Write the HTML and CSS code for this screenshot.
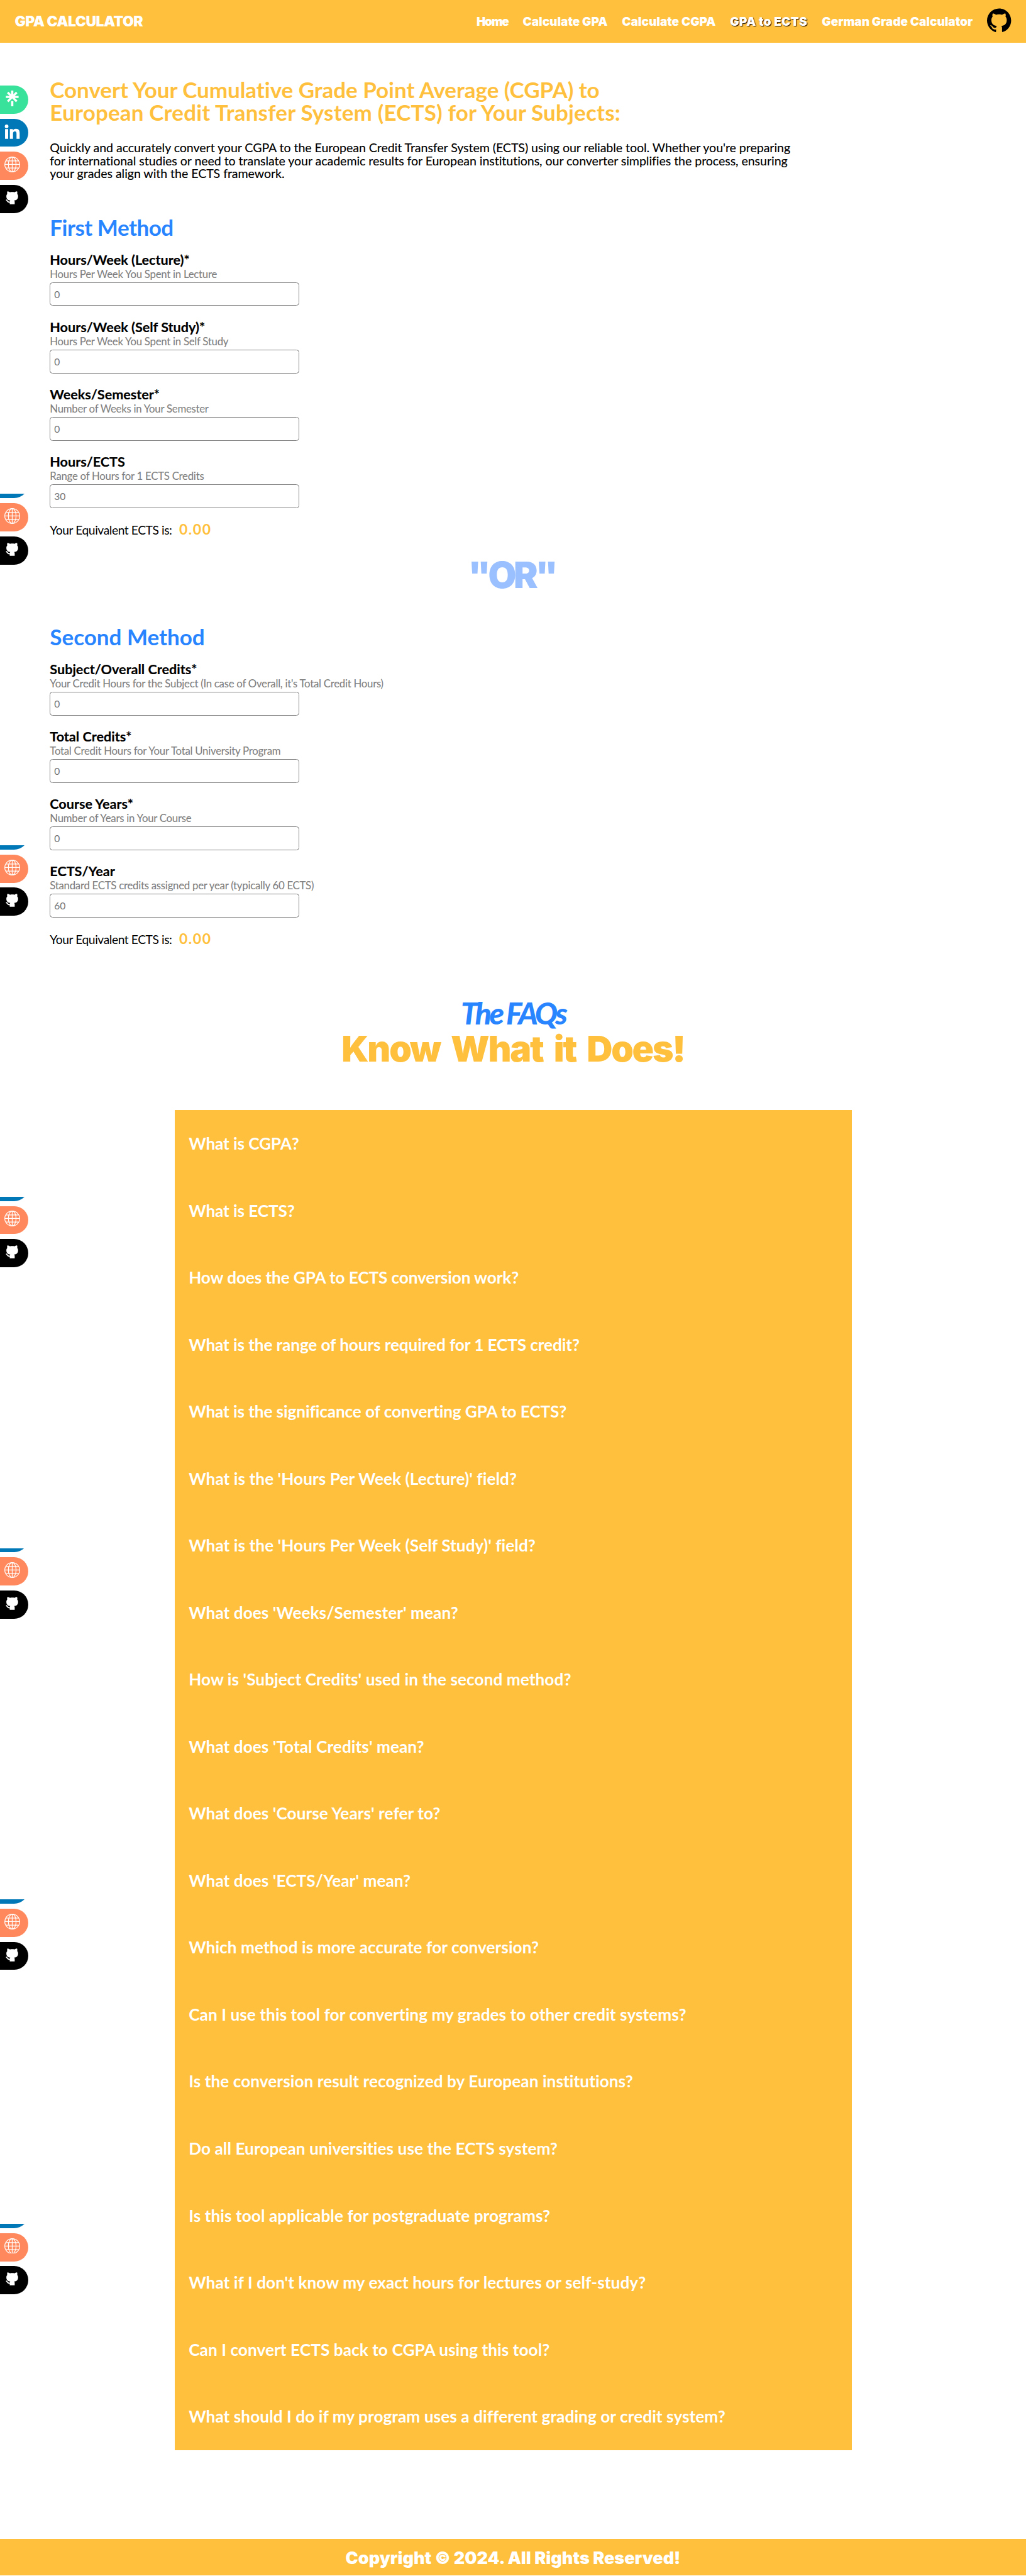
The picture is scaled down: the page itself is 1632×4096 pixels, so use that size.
FILE: index.html
```
<!DOCTYPE html>
<html lang="en">
<head>
<meta charset="utf-8">
<title>GPA to ECTS</title>
<link rel="stylesheet" href="styles.css">
</head>
<body>
<svg class="sprite" aria-hidden="true">
  <symbol id="i-tree" viewBox="0 0 24 24"><path d="m13.736 5.853 4.005-4.117 2.325 2.381-4.2 4.005h5.908v3.304h-5.937l4.229 4.108-2.325 2.334L12 12.099l-5.74 5.769-2.325-2.325 4.229-4.108H2.226V8.121h5.908L3.934 4.117l2.325-2.381 4.005 4.117V0h3.472zM10.264 16.159h3.472V24h-3.472z"/></symbol>
  <symbol id="i-in" viewBox="0 0 24 24"><circle cx="3.4" cy="3.8" r="2.8"/><path d="M1 8h4.8v14.9H1zM8.4 8h4.6v2.1c.7-1.3 2.3-2.6 4.7-2.6 4.6 0 5.7 2.9 5.7 7.1v8.3h-4.8v-7.4c0-1.8-.1-4-2.500-4-2.500 0-2.900 1.900-2.900 3.900v7.500H8.400z"/></symbol>
  <symbol id="i-globe" viewBox="0 0 24 24"><g fill="none" stroke="#fff" stroke-width="1.15"><circle cx="12" cy="12" r="11.4"/><ellipse cx="12" cy="12" rx="5.9" ry="11.4"/><path d="M12 .6v22.8M.6 12h22.8M2.4 6.6h19.2M2.4 17.4h19.2"/></g></symbol>
  <symbol id="i-cat" viewBox="0 0 24 24"><path d="M4.6 2.1C6 2 7.600 2.900 8.600 3.500c2-.5 4.800-.5 6.800 0 1-.6 2.600-1.500 4-1.400.6 1.400.5 2.900.2 3.900 1 1.100 1.400 2.300 1.400 3.800 0 4.200-2.400 5.900-6 6.300.6.7.8 1.400.8 2.300V22H8.200v-3.600c0-.9.2-1.600.8-2.300-3.600-.4-6-2.100-6-6.300 0-1.500.4-2.700 1.400-3.800-.3-1-.4-2.500.2-3.900z"/><path d="M2.500 15.400c2.300.3 1.600 3.900 6.200 3.500" fill="none" stroke="#fff" stroke-width="1.700"/></symbol>
</svg>

<header class="nav">
  <div class="logo">GPA CALCULATOR</div>
  <nav class="links">
    <a class="link link-home">Home</a>
    <a class="link">Calculate GPA</a>
    <a class="link">Calculate CGPA</a>
    <a class="link link-active">GPA to ECTS</a>
    <a class="link">German Grade Calculator</a>
    <svg class="gh" viewBox="0 0 24 24"><path d="M12 .297c-6.63 0-12 5.373-12 12 0 5.303 3.438 9.8 8.205 11.385.6.113.82-.258.82-.577 0-.285-.01-1.04-.015-2.04-3.338.724-4.042-1.61-4.042-1.61C4.422 18.07 3.633 17.7 3.633 17.7c-1.087-.744.084-.729.084-.729 1.205.084 1.838 1.236 1.838 1.236 1.07 1.835 2.809 1.305 3.495.998.108-.776.417-1.305.76-1.605-2.665-.3-5.466-1.332-5.466-5.93 0-1.31.465-2.38 1.235-3.22-.135-.303-.54-1.523.105-3.176 0 0 1.005-.322 3.3 1.23.96-.267 1.98-.399 3-.405 1.02.006 2.04.138 3 .405 2.28-1.552 3.285-1.23 3.285-1.23.645 1.653.24 2.873.12 3.176.765.84 1.23 1.91 1.23 3.22 0 4.61-2.805 5.625-5.475 5.92.42.36.81 1.096.81 2.22 0 1.606-.015 2.896-.015 3.286 0 .315.21.69.825.57C20.565 22.092 24 17.592 24 12.297c0-6.627-5.373-12-12-12"/></svg>
  </nav>
</header>

<aside class="social social-1"><div class="tab tree"><svg><use href="#i-tree"/></svg></div><div class="tab in"><svg><use href="#i-in"/></svg></div><div class="tab globe"><svg><use href="#i-globe"/></svg></div><div class="tab cat"><svg><use href="#i-cat"/></svg></div></aside>
<aside class="social social-cut social-2"><div class="tab in"></div><div class="tab globe"><svg><use href="#i-globe"/></svg></div><div class="tab cat"><svg><use href="#i-cat"/></svg></div></aside>
<aside class="social social-cut social-3"><div class="tab in"></div><div class="tab globe"><svg><use href="#i-globe"/></svg></div><div class="tab cat"><svg><use href="#i-cat"/></svg></div></aside>
<aside class="social social-cut social-4"><div class="tab in"></div><div class="tab globe"><svg><use href="#i-globe"/></svg></div><div class="tab cat"><svg><use href="#i-cat"/></svg></div></aside>
<aside class="social social-cut social-5"><div class="tab in"></div><div class="tab globe"><svg><use href="#i-globe"/></svg></div><div class="tab cat"><svg><use href="#i-cat"/></svg></div></aside>
<aside class="social social-cut social-6"><div class="tab in"></div><div class="tab globe"><svg><use href="#i-globe"/></svg></div><div class="tab cat"><svg><use href="#i-cat"/></svg></div></aside>
<aside class="social social-cut social-7"><div class="tab in"></div><div class="tab globe"><svg><use href="#i-globe"/></svg></div><div class="tab cat"><svg><use href="#i-cat"/></svg></div></aside>

<main class="content">
  <h1 class="title"><span class="tight">Convert Your Cumulative Grade Point Average (CGPA) to</span><br><span class="loose">European Credit Transfer System (ECTS) for Your Subjects:</span></h1>
  <p class="intro">Quickly and accurately convert your CGPA to the European Credit Transfer System (ECTS) using our reliable tool. Whether you're preparing<br>for international studies or need to translate your academic results for European institutions, our converter simplifies the process, ensuring<br>your grades align with the ECTS framework.</p>

  <section class="method">
    <h2 class="heading heading-first">First Method</h2>
    <div class="fields">
      <label class="field"><span class="name">Hours/Week (Lecture)*</span><span class="hint">Hours Per Week You Spent in Lecture</span><input class="box" placeholder="0"></label>
      <label class="field"><span class="name">Hours/Week (Self Study)*</span><span class="hint">Hours Per Week You Spent in Self Study</span><input class="box" placeholder="0"></label>
      <label class="field"><span class="name">Weeks/Semester*</span><span class="hint">Number of Weeks in Your Semester</span><input class="box" placeholder="0"></label>
      <label class="field"><span class="name">Hours/ECTS</span><span class="hint">Range of Hours for 1 ECTS Credits</span><input class="box" placeholder="30"></label>
    </div>
    <p class="result"><span>Your Equivalent ECTS is:</span><strong class="value">0.00</strong></p>
  </section>

  <div class="or">"OR"</div>

  <section class="method">
    <h2 class="heading">Second Method</h2>
    <div class="fields">
      <label class="field"><span class="name">Subject/Overall Credits*</span><span class="hint">Your Credit Hours for the Subject (In case of Overall, it's Total Credit Hours)</span><input class="box" placeholder="0"></label>
      <label class="field"><span class="name">Total Credits*</span><span class="hint">Total Credit Hours for Your Total University Program</span><input class="box" placeholder="0"></label>
      <label class="field"><span class="name">Course Years*</span><span class="hint">Number of Years in Your Course</span><input class="box" placeholder="0"></label>
      <label class="field"><span class="name">ECTS/Year</span><span class="hint">Standard ECTS credits assigned per year (typically 60 ECTS)</span><input class="box" placeholder="60"></label>
    </div>
    <p class="result"><span>Your Equivalent ECTS is:</span><strong class="value">0.00</strong></p>
  </section>
</main>

<section class="faq">
  <div class="kicker">The FAQs</div>
  <h2 class="faq-title">Know What it Does!</h2>
  <div class="faq-list">
    <div class="q snug">What is CGPA?</div>
    <div class="q snug">What is ECTS?</div>
    <div class="q snug">How does the GPA to ECTS conversion work?</div>
    <div class="q snug">What is the range of hours required for 1 ECTS credit?</div>
    <div class="q snug">What is the significance of converting GPA to ECTS?</div>
    <div class="q">What is the 'Hours Per Week (Lecture)' field?</div>
    <div class="q">What is the 'Hours Per Week (Self Study)' field?</div>
    <div class="q">What does 'Weeks/Semester' mean?</div>
    <div class="q">How is 'Subject Credits' used in the second method?</div>
    <div class="q">What does 'Total Credits' mean?</div>
    <div class="q">What does 'Course Years' refer to?</div>
    <div class="q">What does 'ECTS/Year' mean?</div>
    <div class="q">Which method is more accurate for conversion?</div>
    <div class="q">Can I use this tool for converting my grades to other credit systems?</div>
    <div class="q">Is the conversion result recognized by European institutions?</div>
    <div class="q">Do all European universities use the ECTS system?</div>
    <div class="q">Is this tool applicable for postgraduate programs?</div>
    <div class="q">What if I don't know my exact hours for lectures or self-study?</div>
    <div class="q">Can I convert ECTS back to CGPA using this tool?</div>
    <div class="q">What should I do if my program uses a different grading or credit system?</div>
  </div>
</section>

<footer class="footer">Copyright © 2024. All Rights Reserved!</footer>
</body>
</html>
```
FILE: styles.css
```
* { box-sizing: border-box; }
body { margin: 0; position: relative; background: #fff; color: #000; font-family: Lato, "Open Sans", sans-serif; }
h1, h2, p { margin: 0; }
.sprite { display: none; }

.nav { display: flex; align-items: center; justify-content: space-between; height: 68px; padding: 0 23.4px; background: #ffc03d; color: #fff; font-family: Inter, sans-serif; font-weight: 900; }
.logo { font-size: 23px; letter-spacing: -0.55px; }
.links { display: flex; align-items: center; gap: 23px; height: 68px; }
.link { font-size: 19px; white-space: nowrap; padding-top: 1.5px; }
.link-home { letter-spacing: -1.3px; }
.link-active { letter-spacing: 0.4px; text-shadow: 1px 1px 1px #000; }
.gh { width: 38.4px; height: 38.4px; margin-bottom: 3px; }

.social { position: absolute; left: 0; top: 136px; width: 45.3px; display: flex; flex-direction: column; gap: 7.9px; }
.social-cut { height: 112.2px; overflow: hidden; justify-content: flex-end; }
.social-2 { top: 785.4px; }
.social-3 { top: 1344.1px; }
.social-4 { top: 1902.8px; }
.social-5 { top: 2461.6px; }
.social-6 { top: 3020.3px; }
.social-7 { top: 3536px; }
.tab { flex: none; height: 44.8px; padding: 7.9px 6.8px; border-radius: 0 22.6px 22.6px 0; }
.tab svg { display: block; width: 24.9px; height: 24.9px; fill: #fff; }
.tree { background: #39e29b; }
.in { background: #0077b7; }
.globe { background: #ff895d; }
.cat { background: #000; }

.content { padding: 55.8px 79.3px 0; }
.title { font-size: 35px; line-height: 36.27px; font-weight: 700; color: #ffc03d; }
.tight { letter-spacing: -0.04px; }
.loose { letter-spacing: 0.17px; }
.intro { margin-top: 28.9px; font-size: 19.6px; line-height: 20.4px; letter-spacing: -0.06px; white-space: nowrap; -webkit-text-stroke: 0.15px #000; }
.heading { font-size: 35px; line-height: 36.27px; font-weight: 700; color: #2985ff; }
.heading-first { margin-top: 56.5px; letter-spacing: -0.5px; }
.fields { display: flex; flex-direction: column; gap: 21.2px; margin-top: 21.4px; }
.field { display: flex; flex-direction: column; }
.name { font-size: 21.6px; line-height: 24px; font-weight: 700; -webkit-text-stroke: 0.2px #000; }
.hint { font-size: 16.8px; line-height: 22.5px; letter-spacing: -0.26px; color: #808080; -webkit-text-stroke: 0.1px #808080; }
.box { width: 397px; height: 37.9px; margin-top: 1.5px; padding: 0 6px; border: 1.13px solid #808080; border-radius: 4.5px; background: #fff; font-family: inherit; font-size: 15.6px; }
.box::placeholder { color: #757575; opacity: 1; }
.result { display: flex; align-items: baseline; gap: 11.5px; height: 30px; margin-top: 18px; font-size: 19.2px; line-height: 30px; letter-spacing: -0.4px; }
.value { font-size: 23px; letter-spacing: 1.5px; color: #ffc03d; }
.or { margin: 28.3px 0 50.4px; padding-right: 4px; text-align: center; font: 900 58px/60px Inter, sans-serif; letter-spacing: -4.3px; color: #9bc0ff; }

.faq { display: flex; flex-direction: column; align-items: center; margin-top: 79.9px; }
.kicker { font-size: 48px; line-height: 48px; font-style: italic; font-weight: 900; letter-spacing: -3.6px; color: #2985ff; }
.faq-title { margin-top: 2.9px; font: 900 57px/60px Inter, sans-serif; letter-spacing: -2.2px; word-spacing: 8px; color: #ffc03d; }
.faq-list { width: 1077px; margin-top: 67.3px; padding-left: 22.7px; background: #ffc03d; color: #fff; }
.q { height: 106.53px; line-height: 106.5px; font-size: 26.2px; font-weight: 700; letter-spacing: 0.06px; }
.snug { letter-spacing: -0.11px; }

.footer { height: 58px; margin-top: 141.8px; overflow: hidden; background: #ffc03d; color: #fff; text-align: center; font: 900 27px/61.4px Inter, sans-serif; }
```
